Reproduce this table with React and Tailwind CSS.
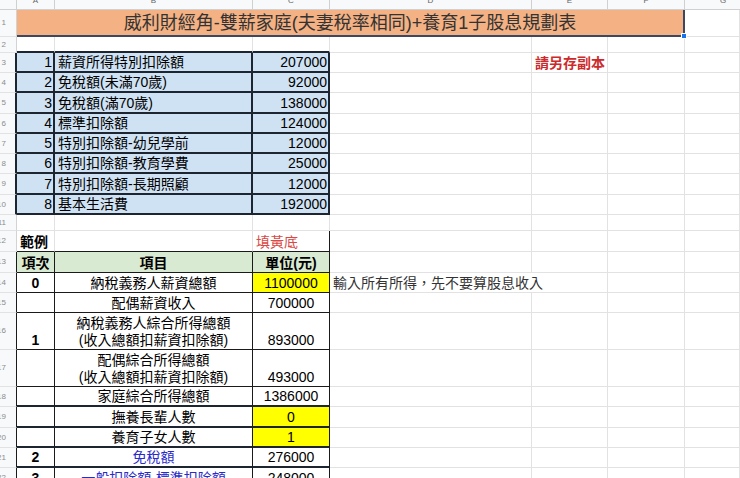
const W = ['w-[17px]', 'w-[38px]', 'w-[198px]', 'w-[77px]', 'w-[202px]', 'w-[76px]', 'w-[77px]', 'w-[55px]'];

// right / bottom borders: l = gridline, d = thin dark, D = thick dark, n = none
const RB = {
  l: 'border-r border-r-[#e2e2e2]',
  d: 'border-r border-r-[#1a1a1a]',
  D: 'border-r-2 border-r-[#1d2530]',
  n: '',
};
const BB = {
  l: 'border-b border-b-[#e2e2e2]',
  d: 'border-b border-b-[#1a1a1a]',
  D: 'border-b-2 border-b-[#1d2530]',
};

const BASE = [
  ['1', '薪資所得特別扣除額', '207000', 'h-[20px]'],
  ['2', '免稅額(未滿70歲)', '92000', 'h-[20px]'],
  ['3', '免稅額(滿70歲)', '138000', 'h-[21px]'],
  ['4', '標準扣除額', '124000', 'h-[20px]'],
  ['5', '特別扣除額-幼兒學前', '12000', 'h-[20px]'],
  ['6', '特別扣除額-教育學費', '25000', 'h-[20px]'],
  ['7', '特別扣除額-長期照顧', '12000', 'h-[21px]'],
  ['8', '基本生活費', '192000', 'h-[20px]'],
];

const LEFT = 'justify-start pl-[3px]';
const MID = 'justify-center';
const BLUE_CELL = 'bg-[#cfe2f3]';
const YELLOW = 'bg-[#ffff00]';

function Cell({ w, t, r = 'l', b = 'l', cls = LEFT }) {
  return (
    <div className={`${w} shrink-0 h-full flex items-end whitespace-nowrap ${RB[r]} ${BB[b]} ${cls}`}>
      {t != null && <span className="block leading-[17px] text-center">{t}</span>}
    </div>
  );
}

function RowNum({ n, r = 'l' }) {
  const right = r === 'l' ? 'border-r border-r-[#d3d3d3]' : RB[r];
  return (
    <div className={`w-[17px] shrink-0 h-full bg-[#f8f9fa] flex items-center overflow-hidden text-[8px] text-[#8c8c8c] border-b border-b-[#e2e2e2] ${right}`}>
      <div className="w-[6px] shrink-0 flex justify-end">
        <span className="whitespace-nowrap leading-none">{n}</span>
      </div>
    </div>
  );
}

function Row({ h, n, hdr = 'l', cells = [] }) {
  return (
    <div className={`flex ${h}`}>
      <RowNum n={n} r={hdr} />
      {W.slice(1).map((w, i) => (
        <Cell key={i} w={w} {...(cells[i] || {})} />
      ))}
    </div>
  );
}

function ColHeader() {
  const letters = ['A', 'B', 'C', 'D', 'E', 'F'];
  return (
    <div className="flex h-[10px] text-[8px] leading-none text-[#666]">
      <div className="w-[17px] shrink-0 bg-[#f8f9fa] border-r border-b border-[#d0d0d0]" />
      {letters.map((l, i) => (
        <div key={l} className={`${W[i + 1]} shrink-0 bg-[#f8f9fa] border-r border-b border-[#d0d0d0] flex justify-center overflow-hidden`}>
          <span className="-mt-[3px]">{l}</span>
        </div>
      ))}
      <div className="w-[55px] shrink-0 bg-[#f8f9fa] border-b border-[#d0d0d0] flex overflow-hidden pl-[35px]">
        <span className="-mt-[3px]">G</span>
      </div>
    </div>
  );
}

// table 2 row helper
function t2(a, bText, c, opts = {}) {
  const b = opts.b || 'd';
  return [
    { t: a, r: 'd', b, cls: `${MID} font-bold ${opts.aBg || ''}` },
    { t: bText, r: 'd', b, cls: `${MID} ${opts.bCls || ''}` },
    { t: c, r: 'd', b, cls: `${MID} ${opts.cBg || ''}` },
    ...(opts.extra || []),
  ];
}

const twoLine = (a, b) => (
  <>
    {a}
    <br />
    {b}
  </>
);

export default function App() {
  return (
    <div className="w-[740px] h-[478px] overflow-hidden bg-white text-[14px] text-black font-[family-name:'Liberation_Sans','Noto_Sans_CJK_TC',sans-serif]">
      <ColHeader />

      {/* title row */}
      <div className="flex h-[27px]">
        <RowNum n="1" />
        <div className="w-[668px] shrink-0 h-full relative bg-[#f4b183] border-b-2 border-r-2 border-[#3b4763] flex items-center justify-center text-[18px] text-[#333] whitespace-nowrap">
          <span className="pt-[1px]">威利財經角-雙薪家庭(夫妻稅率相同)+養育1子股息規劃表</span>
          <div className="absolute -right-[4px] -bottom-[4px] w-[6px] h-[6px] bg-[#1a73e8] border border-white" />
        </div>
        <Cell w="w-[55px]" />
      </div>

      <Row h="h-[16px]" n="2" cells={[{ b: 'D' }, { b: 'D' }, { b: 'D' }]} />

      {BASE.map(([no, label, val, h], i) => (
        <Row
          key={no}
          h={h}
          n={String(i + 3)}
          hdr="D"
          cells={[
            { t: no, r: 'D', b: 'D', cls: `justify-end pr-[1px] ${BLUE_CELL}` },
            { t: label, r: 'D', b: 'D', cls: `${LEFT} ${BLUE_CELL}` },
            { t: val, r: 'D', b: 'D', cls: `justify-end pr-[1px] ${BLUE_CELL}` },
            {},
            i === 0 ? { t: '請另存副本', cls: `${LEFT} font-bold text-[#cc2b2b]` } : {},
          ]}
        />
      ))}

      <Row h="h-[16px]" n="11" />

      <Row
        h="h-[21px]"
        n="12"
        cells={[
          { t: '範例', b: 'd', cls: `${LEFT} font-bold` },
          { b: 'd' },
          { t: '填黃底', b: 'd', r: 'd', cls: `${LEFT} text-[#d84a45]` },
        ]}
      />

      <Row
        h="h-[21px]"
        n="13"
        hdr="d"
        cells={t2('項次', '項目', '單位(元)', {
          aBg: 'bg-[#d9ead3]',
          bCls: 'bg-[#d9ead3] font-bold',
          cBg: 'bg-[#d9ead3] font-bold',
        })}
      />

      <Row
        h="h-[20px]"
        n="14"
        hdr="d"
        cells={t2('0', '納稅義務人薪資總額', '1100000', {
          cBg: YELLOW,
          extra: [{ t: '輸入所有所得，先不要算股息收入', r: 'n', cls: `${LEFT} text-[#333]` }],
        })}
      />

      <Row h="h-[20px]" n="15" hdr="d" cells={t2(null, '配偶薪資收入', '700000')} />

      <Row
        h="h-[37px]"
        n="16"
        hdr="d"
        cells={t2('1', twoLine('納稅義務人綜合所得總額', '(收入總額扣薪資扣除額)'), '893000')}
      />

      <Row
        h="h-[37px]"
        n="17"
        hdr="d"
        cells={t2(null, twoLine('配偶綜合所得總額', '(收入總額扣薪資扣除額)'), '493000')}
      />

      <Row h="h-[20px]" n="18" hdr="d" cells={t2(null, '家庭綜合所得總額', '1386000', { b: 'D' })} />

      <Row h="h-[21px]" n="19" hdr="d" cells={t2(null, '撫養長輩人數', '0', { b: 'D', cBg: YELLOW })} />

      <Row h="h-[20px]" n="20" hdr="d" cells={t2(null, '養育子女人數', '1', { b: 'D', cBg: YELLOW })} />

      <Row h="h-[20px]" n="21" hdr="d" cells={t2('2', '免稅額', '276000', { b: 'D', bCls: 'text-[#2b2bc9]' })} />

      <Row h="h-[20px]" n="22" hdr="d" cells={t2('3', '一般扣除額-標準扣除額', '248000', { bCls: 'text-[#2b2bc9]' })} />
    </div>
  );
}
